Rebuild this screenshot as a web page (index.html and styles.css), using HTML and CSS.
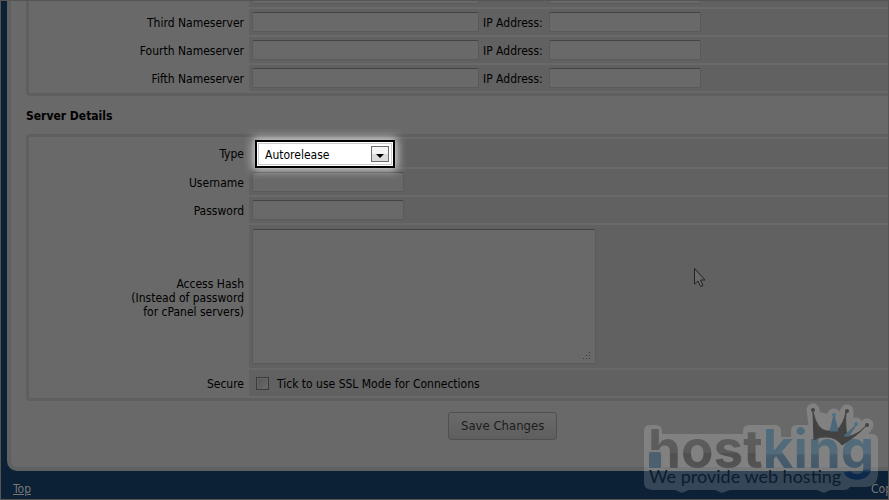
FILE: index.html
```
<!DOCTYPE html>
<html lang="en">
<head>
    <meta charset="UTF-8">
    <meta name="viewport" content="width=device-width, initial-scale=1.0">
    <title>Server Details</title>
    <link rel="stylesheet" href="styles.css">
</head>
<body>
    <div class="window">
        <form class="panel">
            <div class="group nameservers">
                <div class="row">
                    <span class="name"></span>
                    <div class="field">
                        <input type="text" class="text host" aria-label="Second Nameserver">
                        <span class="spacer"></span>
                        <input type="text" class="text" aria-label="Second Nameserver IP Address">
                    </div>
                </div>
                <div class="row">
                    <label class="name" for="ns3">Third Nameserver</label>
                    <div class="field">
                        <input type="text" id="ns3" class="text host">
                        <label for="ip3">IP Address:</label>
                        <input type="text" id="ip3" class="text">
                    </div>
                </div>
                <div class="row">
                    <label class="name" for="ns4">Fourth Nameserver</label>
                    <div class="field">
                        <input type="text" id="ns4" class="text host">
                        <label for="ip4">IP Address:</label>
                        <input type="text" id="ip4" class="text">
                    </div>
                </div>
                <div class="row">
                    <label class="name" for="ns5">Fifth Nameserver</label>
                    <div class="field">
                        <input type="text" id="ns5" class="text host">
                        <label for="ip5">IP Address:</label>
                        <input type="text" id="ip5" class="text">
                    </div>
                </div>
            </div>

            <h2>Server Details</h2>

            <div class="group">
                <div class="row row-type">
                    <label class="name" for="type">Type</label>
                    <div class="field">
                        <div class="spotlight">
                            <select id="type">
                                <option>Autorelease</option>
                            </select>
                            <svg class="arrow" width="18" height="16" viewBox="0 0 18 16">
                                <rect x="0.5" y="0.5" width="17" height="15" fill="#dcdcdc" stroke="#6c6c6c"/>
                                <rect x="1" y="1" width="16" height="7" fill="#f4f4f4"/>
                                <path d="M5 8h8l-4 4z" fill="#000"/>
                            </svg>
                        </div>
                    </div>
                </div>
                <div class="row">
                    <label class="name" for="username">Username</label>
                    <div class="field"><input type="text" id="username" class="text"></div>
                </div>
                <div class="row">
                    <label class="name" for="password">Password</label>
                    <div class="field"><input type="password" id="password" class="text"></div>
                </div>
                <div class="row">
                    <label class="name" for="hash">Access Hash<br>(Instead of password<br>for cPanel servers)</label>
                    <div class="field field-hash">
                        <textarea id="hash"></textarea>
                        <svg class="grip" width="8" height="8" viewBox="0 0 8 8" fill="#3c3c3c">
                            <path d="M6 0h1v1h-1zM3 3h1v1h-1zM6 3h1v1h-1zM0 6h1v1h-1zM3 6h1v1h-1zM6 6h1v1h-1z"/>
                        </svg>
                    </div>
                </div>
                <div class="row">
                    <span class="name">Secure</span>
                    <div class="field">
                        <input type="checkbox" id="secure">
                        <label for="secure">Tick to use SSL Mode for Connections</label>
                    </div>
                </div>
            </div>

            <div class="actions">
                <button type="button" class="save">Save Changes</button>
            </div>
        </form>

        <footer>
            <a href="#">Top</a>
            <span class="copyright">Copyright</span>
        </footer>

        <svg class="cursor" width="14" height="22" viewBox="0 0 14 22">
            <path d="M1.500 1.500v15.500l3.500-3 2.500 5.500 2.500-1-2.500-5.500h4.500z" fill="#6a6a6a" stroke="#222"/>
        </svg>

        <svg class="logo" width="249" height="98" viewBox="0 0 249 98">
            <defs>
                <linearGradient id="grey" gradientUnits="userSpaceOnUse" x1="0" y1="30" x2="0" y2="68">
                    <stop offset="0" stop-color="#5f5f5f"/>
                    <stop offset="0.6" stop-color="#5a5a5a"/>
                    <stop offset="0.62" stop-color="#505050"/>
                    <stop offset="1" stop-color="#545454"/>
                </linearGradient>
                <linearGradient id="blue" gradientUnits="userSpaceOnUse" x1="0" y1="30" x2="0" y2="84">
                    <stop offset="0" stop-color="#4f6c7b"/>
                    <stop offset="0.44" stop-color="#536a79"/>
                    <stop offset="0.46" stop-color="#485d6d"/>
                    <stop offset="0.72" stop-color="#43596c"/>
                    <stop offset="0.78" stop-color="#0d2b50"/>
                    <stop offset="1" stop-color="#0b2444"/>
                </linearGradient>
            </defs>
            <!-- pale halo behind the wordmark and the crown -->
            <g class="halo" stroke-linejoin="round" stroke-linecap="round">
                <path stroke="none" d="M4 80V31q0-6 6-6h6q6 0 6 6v3h81v-3q0-6 6-6h26q6 0 6 6v6h10v-6q0-6 6-6h14v9h61q6 0 6 6v33q0 14-14 14h-14q-2 3-6 3h-14l-6 3-7-3H90l-8 3-7-3H49l-7 3-7-3H13q-9 0-9-7z"/>
                <path d="M173 10l4 30 29-1 8 4 13-18M177 36l17-21M196 34l11-23v26l9-13" stroke-width="13"/>
            </g>
            <text class="brand" x="8" y="68" fill="url(#grey)">host<tspan fill="url(#blue)">king</tspan></text>
            <path d="M8 69V54q0-3 3-3h8q3 0 3 3v15z" fill="#4c6070" stroke="#7e7e7e" stroke-width="2"/>
            <path d="M173 12q4 18 14 19h9q8-7 10-19-1 14 1 23l4 1q9-3 15-10-8 9-24 19-6-8-15-8-7-1-13 3z" fill="#424242" stroke="#424242" stroke-linejoin="round"/>
            <path d="M194 15l4 16h-8zM216 25l-7 11h-5z" fill="#4b687b" stroke="#4b687b"/>
            <g fill="#444">
                <circle cx="173" cy="10" r="2"/>
                <circle cx="207" cy="11" r="2"/>
                <circle cx="227" cy="25" r="2"/>
                <circle cx="194" cy="15" r="2" fill="#4b7287"/>
                <circle cx="216" cy="24" r="2" fill="#4b7287"/>
            </g>
            <text class="tagline" x="9" y="83">We provide web hosting</text>
        </svg>
    </div>
</body>
</html>
```
FILE: styles.css
```
* { margin: 0; padding: 0; box-sizing: border-box; }
body { background: #0c2136; font: 12px/14px "DejaVu Sans Condensed", "DejaVu Sans", sans-serif; color: #000; }
.window { position: relative; min-height: 100vh; border: 1px solid #555; overflow: hidden; background: #0c2136; }

.panel { margin-left: 6px; padding: 0 0 27px 15px; background: #696969; border: solid #5e6062; border-width: 0 0 4px 4px; border-bottom-left-radius: 10px; }
.panel h2 { padding: 13px 0 11px; font-size: 12px; line-height: 14px; }

.group { display: flex; flex-direction: column; gap: 2px; padding: 2px 0 2px 2px; border: 3px solid #5e5f61; border-right: 0; border-radius: 4px 0 0 4px; }
.nameservers { margin-top: -25px; }
.row { display: grid; grid-template-columns: 216px 1fr; gap: 2px; min-height: 26px; }
.row-type { min-height: 28px; }
.name { align-self: center; padding: 2px 3px 0 0; text-align: right; }
.field { display: flex; align-items: center; gap: 4px; padding: 0 3px; background: #616161; }
.field label { padding-top: 2px; }

.text { width: 152px; height: 20px; padding: 0 4px; background: #696969; border: 1px solid #5a5a5c; border-top-color: #434346; border-radius: 2px; font: inherit; }
.host { width: 227px; }
.host + label, .spacer { width: 62px; }

.spotlight { position: relative; width: 140px; height: 28px; margin: 1px 0 -1px 3px; padding: 1px; background: #fff; border: 2px solid #000; box-shadow: 0 0 10px 2px #ddd; }
.spotlight select { width: 100%; height: 22px; padding: 1px 0 0 6px; appearance: none; background: #fff; border: 1px solid #ccc; color: #000; font: inherit; }
.arrow { position: absolute; top: 4px; right: 4px; pointer-events: none; }

.field-hash { position: relative; padding: 4px 3px; }
textarea { width: 344px; height: 135px; padding: 4px; background: #696969; border: 1px solid #5a5a5c; border-top-color: #434346; border-radius: 2px; font: inherit; resize: none; }
.grip { position: absolute; left: 334px; bottom: 8px; }

input[type="checkbox"] { appearance: none; width: 13px; height: 13px; margin: 0 4px; background: linear-gradient(135deg, #555, #6b6b6b); border: 1px solid #3b3b3b; outline: 1px solid #666; outline-offset: -2px; }

.actions { display: flex; padding: 11px 0 0 422px; }
.save { height: 28px; padding: 0 12px; background: linear-gradient(#6a6a6a, #5e5e5e); border: 1px solid #505050; border-radius: 3px; color: #1c1c1c; font: 13px/16px "DejaVu Sans Condensed", "DejaVu Sans", sans-serif; }

footer { display: flex; justify-content: space-between; padding: 11px 0 0 12px; color: #777; }
footer a { color: #777; }
.copyright { width: 17px; overflow: hidden; }

.cursor { position: absolute; left: 692px; top: 266px; }
.logo { position: absolute; right: -1px; bottom: 1px; pointer-events: none; }
.brand { font: 700 53px Inter, sans-serif; }
.tagline { font: 18px Lato, sans-serif; fill: #0b1c30; }
.halo { fill: #eee; stroke: #eee; opacity: 0.18; }
```
